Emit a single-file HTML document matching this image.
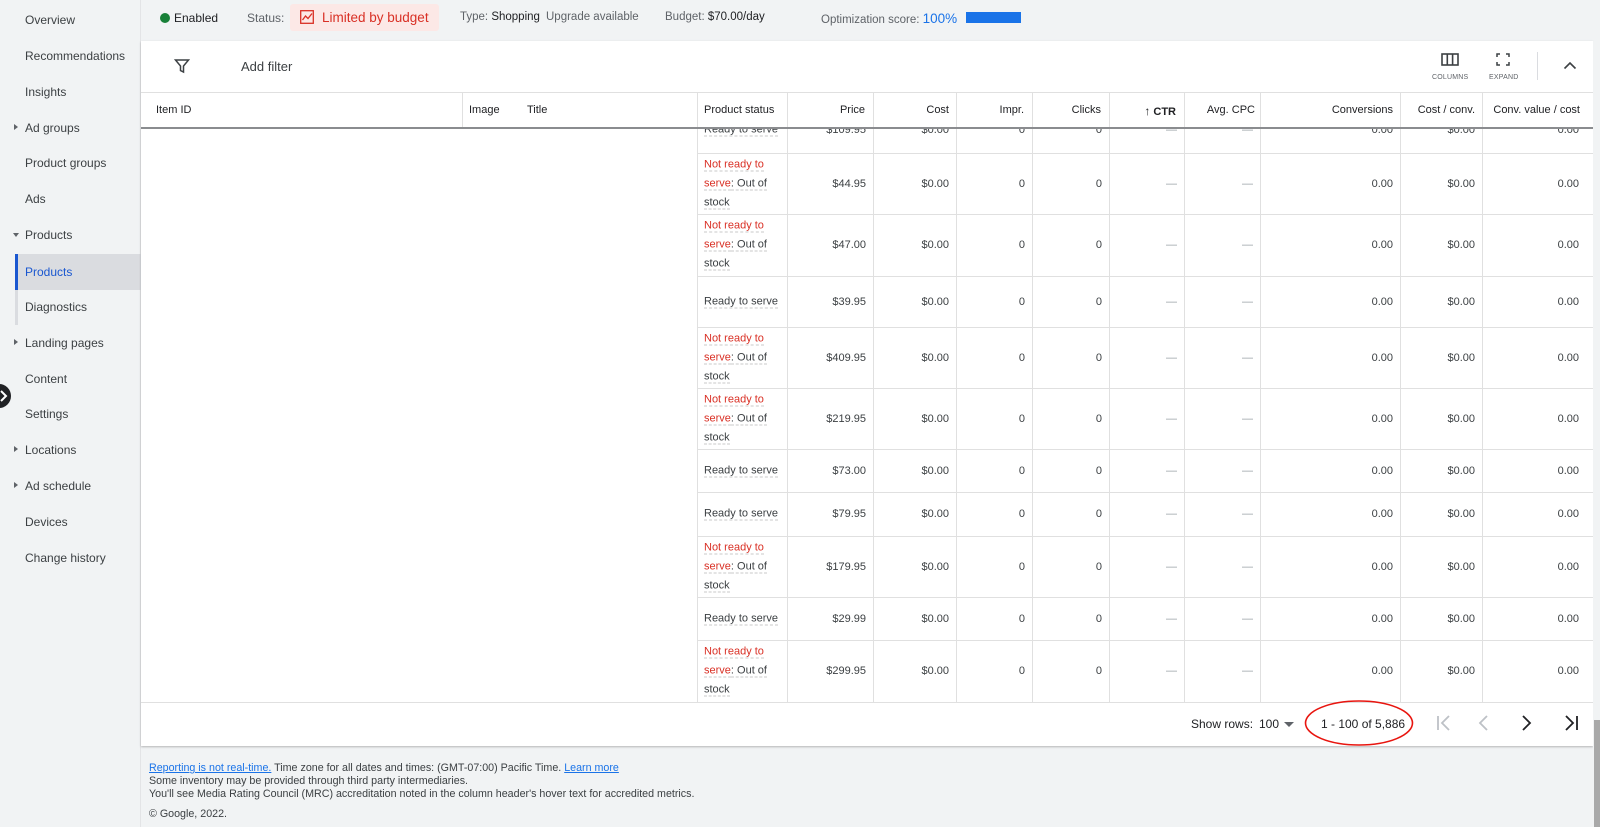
<!DOCTYPE html>
<html><head><meta charset="utf-8"><style>
*{box-sizing:border-box;margin:0;padding:0}
body{width:1600px;height:827px;overflow:hidden;background:#f1f3f4;font-family:"Liberation Sans",Arial,sans-serif;color:#3c4043;position:relative}
.a{position:absolute;white-space:nowrap}
#side{position:absolute;left:0;top:0;width:141px;height:827px;background:#f1f3f4;border-right:1px solid #e3e4e6}
#side .i{position:absolute;left:25px;font-size:12px;color:#3c4043;transform:translateY(-50%)}
.tri{position:absolute;left:14px;width:0;height:0}
#card{position:absolute;left:141px;top:41px;width:1452px;height:705px;background:#fff;box-shadow:0 1px 2px rgba(0,0,0,.25)}
.hd{font-size:11px;color:#202124;position:absolute;top:104px;white-space:nowrap}
.vl{position:absolute;width:1px;background:#e0e0e0}
.hl{position:absolute;height:1px;background:#e0e0e0;left:697px;width:896px}
.c{position:absolute;font-size:11px;color:#3c4043;text-align:right;transform:translateY(-50%);white-space:nowrap}
.st{position:absolute;left:704px;font-size:11px;line-height:19px;color:#3c4043;transform:translateY(-50%);white-space:nowrap}
.st span{border-bottom:1px dashed #c8c8c8}
.r{color:#d93025}
.ft{position:absolute;left:149px;font-size:10.7px;color:#3c4043;white-space:nowrap}
#clip{position:absolute;left:0;top:129px;width:1600px;height:573px;overflow:hidden}
</style></head><body>
<div id="side">
<div class="i" style="top:20px">Overview</div>
<div class="i" style="top:56px">Recommendations</div>
<div class="i" style="top:92px">Insights</div>
<div class="tri" style="top:124px;border-left:4px solid #5f6368;border-top:3px solid transparent;border-bottom:3px solid transparent"></div>
<div class="i" style="top:128px">Ad groups</div>
<div class="i" style="top:163px">Product groups</div>
<div class="i" style="top:199px">Ads</div>
<div class="tri" style="top:233px;left:13px;border-top:4px solid #5f6368;border-left:3px solid transparent;border-right:3px solid transparent"></div>
<div class="i" style="top:235px">Products</div>
<div style="position:absolute;left:15px;top:254px;width:126px;height:36px;background:#dadce0"></div>
<div style="position:absolute;left:15px;top:254px;width:3px;height:36px;background:#1a57d0"></div>
<div style="position:absolute;left:15px;top:290px;width:3px;height:35px;background:#dadce0"></div>
<div class="i" style="top:272px;color:#1a57d0">Products</div>
<div class="i" style="top:307px">Diagnostics</div>
<div class="tri" style="top:339px;border-left:4px solid #5f6368;border-top:3px solid transparent;border-bottom:3px solid transparent"></div>
<div class="i" style="top:343px">Landing pages</div>
<div class="i" style="top:379px">Content</div>
<div class="i" style="top:414px">Settings</div>
<div class="tri" style="top:446px;border-left:4px solid #5f6368;border-top:3px solid transparent;border-bottom:3px solid transparent"></div>
<div class="i" style="top:450px">Locations</div>
<div class="tri" style="top:482px;border-left:4px solid #5f6368;border-top:3px solid transparent;border-bottom:3px solid transparent"></div>
<div class="i" style="top:486px">Ad schedule</div>
<div class="i" style="top:522px">Devices</div>
<div class="i" style="top:558px">Change history</div>
</div>
<div style="position:absolute;left:-13px;top:384px;width:24px;height:24px;border-radius:50%;background:#202124"></div>
<svg class="a" style="left:0;top:388px" width="10" height="16"><path d="M1 3l5 5-5 5" stroke="#fff" stroke-width="2" fill="none"/></svg>

<div class="a" style="left:160px;top:13px;width:10px;height:10px;border-radius:50%;background:#188038"></div>
<div class="a" style="left:174px;top:11px;font-size:12px;color:#202124">Enabled</div>
<div class="a" style="left:247px;top:11px;font-size:12px;color:#5f6368">Status:</div>
<div class="a" style="left:290px;top:4px;width:149px;height:27px;background:#fce8e6;border-radius:3px"></div>
<svg class="a" style="left:300px;top:10px" width="14" height="14"><rect x=".7" y=".7" width="12.6" height="12.6" fill="none" stroke="#d93025" stroke-width="1.3"/><path d="M2.5 10l3-4 2.5 2.5 4-5" fill="none" stroke="#d93025" stroke-width="1.3"/></svg>
<div class="a" style="left:322px;top:10px;font-size:13.5px;color:#d93025">Limited by budget</div>
<div class="a" style="left:460px;top:11px;font-size:11.5px;color:#5f6368">Type: <span style="color:#202124">Shopping</span></div>
<div class="a" style="left:546px;top:11px;font-size:11.5px;color:#5f6368">Upgrade available</div>
<div class="a" style="left:665px;top:11px;font-size:11.5px;color:#5f6368">Budget: <span style="color:#202124">$70.00/day</span></div>
<div class="a" style="left:821px;top:11px;font-size:11.5px;color:#5f6368">Optimization score: <span style="color:#1a73e8;font-size:13.5px">100%</span></div>
<div class="a" style="left:966px;top:12px;width:55px;height:11px;background:#1a73e8"></div>

<div id="card"></div>
<svg class="a" style="left:174px;top:58px" width="16" height="16"><path d="M1.5 2h13l-5 6v6l-3-1.5V8z" fill="none" stroke="#3c4043" stroke-width="1.5"/></svg>
<div class="a" style="left:241px;top:59px;font-size:13px;color:#3c4043">Add filter</div>
<svg class="a" style="left:1441px;top:53px" width="18" height="14"><rect x="1" y="1" width="16" height="11" fill="none" stroke="#3c4043" stroke-width="1.6"/><path d="M6.3 1v11M11.6 1v11" stroke="#3c4043" stroke-width="1.6"/></svg>
<div class="a" style="left:1432px;top:74px;font-size:7px;color:#5f6368;letter-spacing:.2px">COLUMNS</div>
<svg class="a" style="left:1496px;top:53px" width="14" height="13"><path d="M1 4V1h3M10 1h3v3M13 9v3h-3M4 12H1V9" fill="none" stroke="#3c4043" stroke-width="1.5"/></svg>
<div class="a" style="left:1489px;top:74px;font-size:7px;color:#5f6368;letter-spacing:.2px">EXPAND</div>
<div class="a" style="left:1537px;top:52px;width:1px;height:28px;background:#dadce0"></div>
<svg class="a" style="left:1563px;top:61px" width="14" height="9"><path d="M1.5 7.5l5.5-5.5 5.5 5.5" fill="none" stroke="#3c4043" stroke-width="1.6"/></svg>

<div class="a" style="left:141px;top:92px;width:1452px;height:1px;background:#e0e0e0"></div>
<div class="vl" style="left:462px;top:92px;height:36px"></div>
<div class="vl" style="left:697px;top:92px;height:36px"></div>
<div class="hd" style="left:156px">Item ID</div>
<div class="hd" style="left:469px">Image</div>
<div class="hd" style="left:527px">Title</div>
<div class="hd" style="left:704px">Product status</div>
<div class="hd" style="right:735px">Price</div>
<div class="hd" style="right:651px">Cost</div>
<div class="hd" style="right:576px">Impr.</div>
<div class="hd" style="right:499px">Clicks</div>
<div class="hd" style="right:424px"><span style="font-size:12px">↑</span> <b>CTR</b></div>
<div class="hd" style="right:345px">Avg. CPC</div>
<div class="hd" style="right:207px">Conversions</div>
<div class="hd" style="right:125px">Cost / conv.</div>
<div class="hd" style="right:20px">Conv. value / cost</div>
<div id="vls"></div>
<div id="clip"><div id="rows" style="position:absolute;left:0;top:-129px;width:1600px;height:702px"></div></div>
<div class="a" style="left:141px;top:127px;width:1452px;height:2px;background:#8a8c8f;z-index:3"></div>

<div class="a" style="left:141px;top:702px;width:1452px;height:1px;background:#e0e0e0"></div>
<div class="a" style="left:1191px;top:717px;font-size:12px;color:#202124">Show rows:</div>
<div class="a" style="left:1259px;top:717px;font-size:12px;color:#202124">100</div>
<div class="a" style="left:1284px;top:722px;width:0;height:0;border-top:5px solid #5f6368;border-left:5px solid transparent;border-right:5px solid transparent"></div>
<div class="a" style="left:1321px;top:717px;font-size:12px;color:#202124">1 - 100 of 5,886</div>
<svg class="a" style="left:1300px;top:698px" width="118" height="50"><ellipse cx="59" cy="25" rx="53.5" ry="22" fill="none" stroke="#e8150f" stroke-width="1.6"/></svg>
<svg class="a" style="left:1436px;top:714px" width="150" height="18"><path d="M2 2v14M13 2l-7 7 7 7" fill="none" stroke="#bdc1c6" stroke-width="1.8"/><path d="M51 2l-7 7 7 7" fill="none" stroke="#bdc1c6" stroke-width="1.8"/><path d="M87 2l7 7-7 7" fill="none" stroke="#202124" stroke-width="1.8"/><path d="M130 2l7 7-7 7M141 2v14" fill="none" stroke="#202124" stroke-width="1.8"/></svg>

<div class="a" style="left:1593px;top:41px;width:7px;height:786px;background:#f1f3f4"></div>
<div class="a" style="left:1594px;top:720px;width:6px;height:107px;background:#a9a9a9"></div>

<div class="ft" style="top:762px"><span style="color:#1a73e8;text-decoration:underline">Reporting is not real-time.</span> Time zone for all dates and times: (GMT-07:00) Pacific Time. <span style="color:#1a73e8;text-decoration:underline">Learn more</span></div>
<div class="ft" style="top:775px">Some inventory may be provided through third party intermediaries.</div>
<div class="ft" style="top:788px">You'll see Media Rating Council (MRC) accreditation noted in the column header's hover text for accredited metrics.</div>
<div class="ft" style="top:808px">© Google, 2022.</div>

<script>
var bounds=[116,153,214,276,327,388,449,492,536,597,640,702];
var data=[["R","$109.95"],["N","$44.95"],["N","$47.00"],["R","$39.95"],["N","$409.95"],["N","$219.95"],["R","$73.00"],["R","$79.95"],["N","$179.95"],["R","$29.99"],["N","$299.95"]];
var cols=[787,873,956,1032,1109,1184,1260,1400,1482,1593];
var v1="";
cols.slice(0,9).forEach(function(x){v1+='<div class="vl" style="left:'+x+'px;top:92px;height:610px"></div>';});
v1+='<div class="vl" style="left:697px;top:128px;height:574px"></div>';
document.getElementById("vls").innerHTML=v1;
var h="";
for(var i=0;i<data.length;i++){
 var t=bounds[i],b=bounds[i+1],m=(i==0)?130:(t+b)/2;
 if(i>0)h+='<div class="hl" style="top:'+t+'px"></div>';
 var s=data[i][0]=="R"?'<span>Ready to serve</span>':'<span class="r">Not ready to</span><br><span class="r">serve</span><span>: Out of</span><br><span>stock</span>';
 h+='<div class="st" style="top:'+m+'px">'+s+'</div>';
 var v=[data[i][1],"$0.00","0","0","—","—","0.00","$0.00","0.00"];
 for(var j=0;j<9;j++){var right=1600-cols[j+1]+7+(j==8?7:0);h+='<div class="c" style="top:'+m+'px;right:'+right+'px;'+(v[j]=="—"?'color:#9aa0a6':'')+'">'+v[j]+'</div>';}
}
document.getElementById("rows").innerHTML=h;
</script>
</body></html>
